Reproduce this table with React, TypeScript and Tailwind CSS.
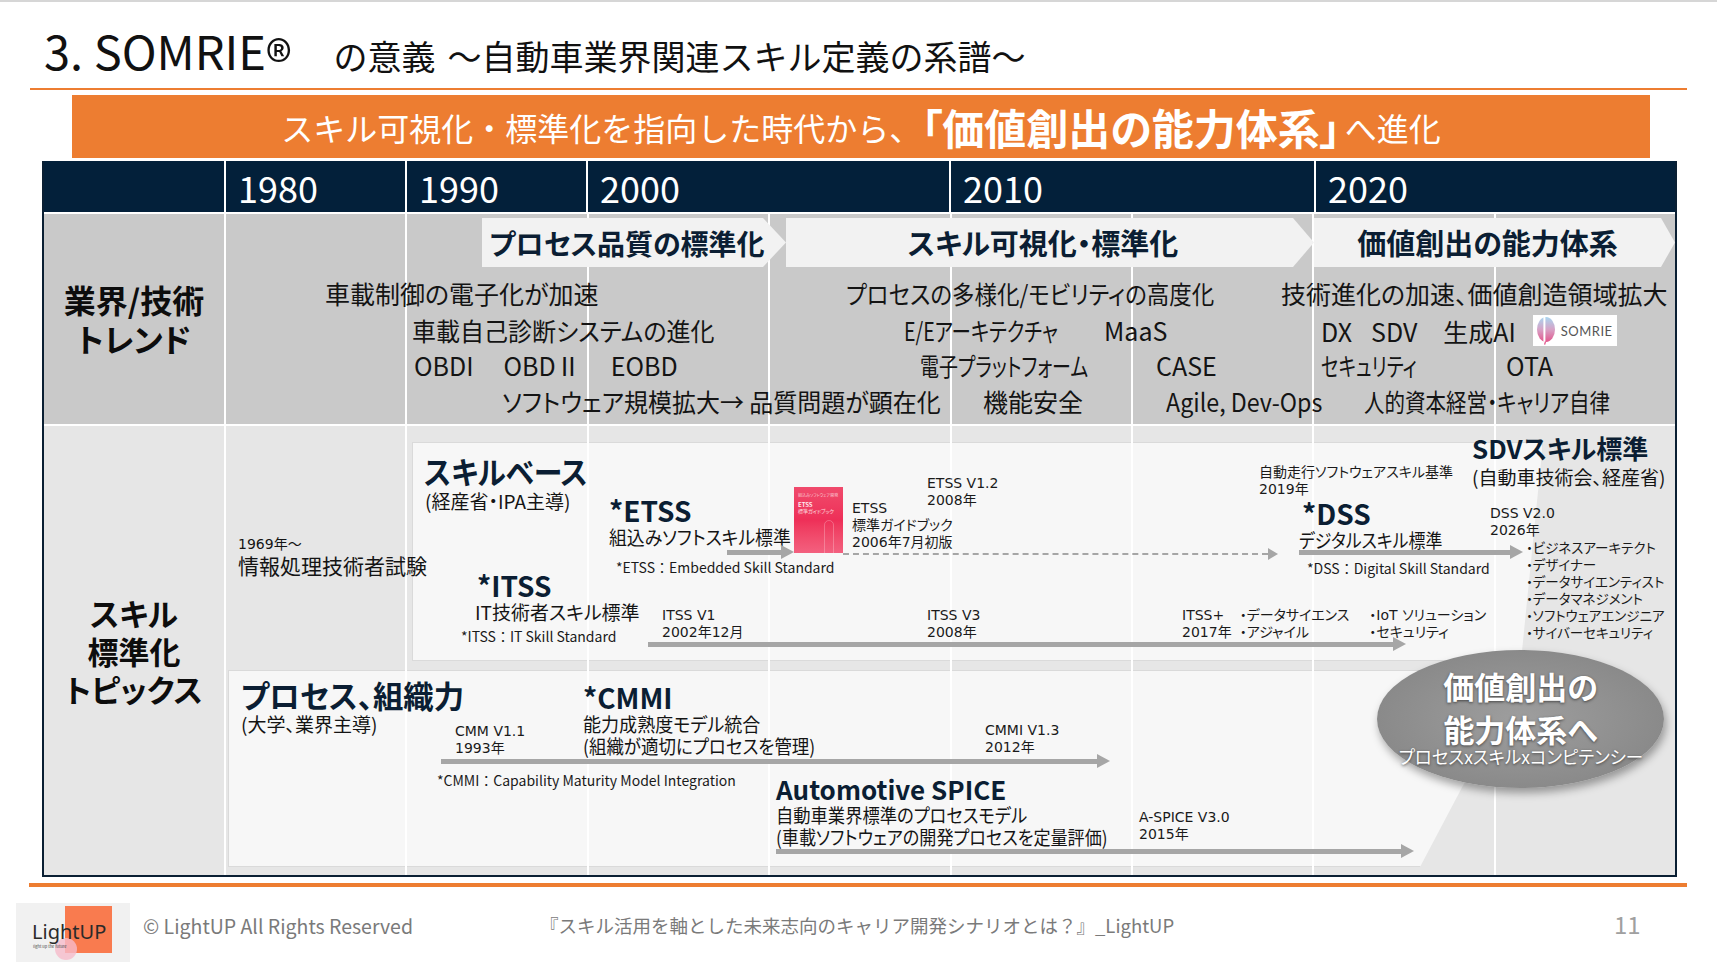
import React from "react";

const NOTE =
  "absolute whitespace-nowrap font-['DejaVu_Sans','Noto_Sans_CJK_JP',sans-serif] text-[14px] leading-[17px] text-[#1a1a1a]";
const LEGEND =
  "absolute whitespace-nowrap text-[14px] leading-[16px] text-[#1a1a1a] [font-feature-settings:normal]";
const TREND = "absolute whitespace-nowrap text-[25px] leading-[30px] text-[#141414]";

function Arrow({ className, dashed }: { className: string; dashed?: boolean }) {
  return (
    <div className={`absolute flex h-[14px] items-center ${className}`}>
      {dashed ? (
        <div className="flex-1 border-t-2 border-dashed border-[#a6a6a6]" />
      ) : (
        <div className="h-[5px] flex-1 bg-[#a6a6a6]" />
      )}
      {dashed ? (
        <div className="h-0 w-0 border-y-[6px] border-l-[10px] border-y-transparent border-l-[#a6a6a6]" />
      ) : (
        <div className="h-0 w-0 border-y-[7px] border-l-[13px] border-y-transparent border-l-[#a6a6a6]" />
      )}
    </div>
  );
}

function ColumnLines() {
  return (
    <div className="absolute inset-0 grid grid-cols-8">
      {[0, 1, 2, 3, 4, 5, 6, 7].map((i) => (
        <div key={i} className="border-l-2 border-white" />
      ))}
    </div>
  );
}

function SomrieLogo() {
  return (
    <div className="flex h-[31px] w-[84px] items-center gap-[4px] bg-white pl-[2px]">
      <svg width="22" height="29" viewBox="0 0 22 29">
        <defs>
          <linearGradient id="somrie-g" x1="0" y1="0" x2="0" y2="1">
            <stop offset="0" stopColor="#a9d6f0" />
            <stop offset="0.5" stopColor="#d7a2c6" />
            <stop offset="1" stopColor="#e2568c" />
          </linearGradient>
        </defs>
        <ellipse cx="11" cy="13.5" rx="9" ry="12.5" fill="url(#somrie-g)" />
        <rect x="8.4" y="0.5" width="2" height="26" fill="#ffffff" />
        <path d="M10.5 25.5 L9.6 28.6" stroke="#e2568c" strokeWidth="1.3" />
      </svg>
      <span className="font-['Lato',sans-serif] text-[13px] tracking-[0.5px] text-[#555]">SOMRIE</span>
    </div>
  );
}

function Book() {
  return (
    <div className="absolute left-[570px] top-[61px] h-[66px] w-[49px] overflow-hidden bg-gradient-to-b from-[#f04a6c] via-[#ee2f58] to-[#f3607f] px-[4px] pt-[6px]">
      <div className="text-[4px] leading-[5px] text-white/70">組込みソフトウェア開発</div>
      <div className="mt-[3px] text-[6px] font-bold leading-[7px] text-white/90">ETSS</div>
      <div className="text-[5px] leading-[6px] text-white/80">標準ガイドブック</div>
      <div className="ml-[26px] mt-[6px] h-[40px] w-[10px] rounded-full border border-white/25" />
    </div>
  );
}

export default function App() {
  return (
    <div className="relative h-[966px] w-[1717px] overflow-hidden bg-white font-['Noto_Sans_CJK_JP',sans-serif] text-[#111]">
      <div className="h-[2px] bg-[#d6d6d6]" />

      {/* title */}
      <div className="flex h-[86px] items-baseline pl-[44px] pt-[24px]">
        <span className="text-[47px] leading-none">3. SOMRIE</span>
        <span className="mt-[5px] self-start text-[54px] leading-none">®</span>
        <span className="ml-[42px] text-[34px] leading-none">の意義</span>
        <span className="ml-[12px] text-[34px] leading-none">～自動車業界関連スキル定義の系譜～</span>
      </div>
      <div className="ml-[30px] h-[2px] w-[1657px] bg-[#ed7d31]" />

      {/* banner */}
      <div className="ml-[72px] mt-[5px] flex h-[63px] w-[1578px] items-center justify-center bg-[#ed7d31] text-white">
        <span className="text-[32px] leading-none">スキル可視化・標準化を指向した時代から、</span>
        <span className="text-[42px] font-bold leading-none [font-feature-settings:'palt']">「価値創出の能力体系」</span>
        <span className="ml-[4px] text-[32px] leading-none">へ進化</span>
      </div>

      {/* table */}
      <div className="ml-[42px] mt-[3px] w-[1635px] border-x-2 border-b-2 border-[#0a1f33]">
        <div className="flex h-[51px] bg-[#03203a] text-[36px] leading-none text-white">
          <div className="w-[180px]" />
          <div className="flex w-[181px] items-center border-l-2 border-white pl-[12px]">1980</div>
          <div className="flex w-[181px] items-center border-l-2 border-white pl-[12px]">1990</div>
          <div className="flex w-[363px] items-center border-l-2 border-white pl-[12px]">2000</div>
          <div className="flex w-[365px] items-center border-l-2 border-white pl-[12px]">2010</div>
          <div className="flex flex-1 items-center border-l-2 border-white pl-[12px]">2020</div>
        </div>
        <div className="h-[2px] bg-white" />

        {/* trend row */}
        <div className="flex h-[210px] bg-[#c9c9c9] [font-feature-settings:'palt']">
          <div className="flex w-[180px] flex-col items-center justify-center text-[32px] font-bold leading-[39px] text-[#0d0d0d]">
            <span>業界/技術</span>
            <span>トレンド</span>
          </div>
          <div className="relative flex-1">
            <ColumnLines />
            <div className="absolute left-[258px] top-[4px] flex h-[49px] w-[304px] items-center justify-center bg-[#f2f2f2] pr-[14px] text-[28px] font-bold text-[#0b1e33] [clip-path:polygon(0_0,calc(100%_-_23px)_0,100%_50%,calc(100%_-_23px)_100%,0_100%)]">
              プロセス品質の標準化
            </div>
            <div className="absolute left-[562px] top-[4px] flex h-[49px] w-[528px] items-center justify-center bg-[#f2f2f2] pr-[14px] text-[29px] font-bold text-[#0b1e33] [clip-path:polygon(0_0,calc(100%_-_21px)_0,100%_50%,calc(100%_-_21px)_100%,0_100%)]">
              スキル可視化・標準化
            </div>
            <div className="absolute left-[1090px] top-[4px] flex h-[49px] w-[361px] items-center justify-center bg-[#f2f2f2] pr-[14px] text-[29px] font-bold text-[#0b1e33] [clip-path:polygon(0_0,calc(100%_-_14px)_0,100%_50%,calc(100%_-_14px)_100%,0_100%)]">
              価値創出の能力体系
            </div>

            <div className={`${TREND} left-[101px] top-[64px]`}>車載制御の電子化が加速</div>
            <div className={`${TREND} left-[622px] top-[64px] origin-left scale-x-[0.9]`}>プロセスの多様化/モビリティの高度化</div>
            <div className={`${TREND} left-[1057px] top-[64px]`}>技術進化の加速、価値創造領域拡大</div>

            <div className={`${TREND} left-[188px] top-[101px] origin-left scale-x-[0.96]`}>車載自己診断システムの進化</div>
            <div className={`${TREND} left-[680px] top-[101px] origin-left scale-x-[0.78]`}>E/Eアーキテクチャ</div>
            <div className={`${TREND} left-[880px] top-[101px]`}>MaaS</div>
            <div className={`${TREND} left-[1097px] top-[101px] flex items-center`}>
              <span>DX</span>
              <span className="ml-[19px]">SDV</span>
              <span className="ml-[26px]">生成AI</span>
              <span className="ml-[17px]">
                <SomrieLogo />
              </span>
            </div>

            <div className={`${TREND} left-[190px] top-[136px] flex gap-[30px]`}>
              <span>OBDI</span>
              <span>OBDⅡ</span>
              <span>EOBD</span>
            </div>
            <div className={`${TREND} left-[696px] top-[136px] origin-left scale-x-[0.76]`}>電子プラットフォーム</div>
            <div className={`${TREND} left-[932px] top-[136px]`}>CASE</div>
            <div className={`${TREND} left-[1097px] top-[136px] origin-left scale-x-[0.74]`}>セキュリティ</div>
            <div className={`${TREND} left-[1282px] top-[136px]`}>OTA</div>

            <div className={`${TREND} left-[278px] top-[172px] origin-left scale-x-[0.96]`}>ソフトウェア規模拡大→ 品質問題が顕在化</div>
            <div className={`${TREND} left-[759px] top-[172px]`}>機能安全</div>
            <div className={`${TREND} left-[942px] top-[172px] origin-left scale-x-[0.93]`}>Agile, Dev-Ops</div>
            <div className={`${TREND} left-[1140px] top-[172px] origin-left scale-x-[0.82]`}>人的資本経営・キャリア自律</div>
          </div>
        </div>
        <div className="h-[2px] bg-white" />

        {/* skill standard row */}
        <div className="flex h-[449px] bg-[#e6e6e6] [font-feature-settings:'palt']">
          <div className="flex w-[180px] flex-col items-center justify-center text-[31px] font-bold leading-[38px] text-[#0d0d0d]">
            <span>スキル</span>
            <span>標準化</span>
            <span>トピックス</span>
          </div>
          <div className="relative flex-1 text-[#141414]">
            <div className="absolute left-[188px] top-[16px] h-[219px] w-[1131px] border border-[#dadada] bg-[#f7f7f7] [clip-path:polygon(0_0,100%_0,calc(100%_-_22px)_100%,0_100%)]" />
            <div className="absolute left-[4px] top-[244px] h-[197px] w-[1296px] border border-[#dadada] bg-[#f7f7f7] [clip-path:polygon(0_0,100%_0,calc(100%_-_104px)_100%,0_100%)]" />
            <ColumnLines />

            {/* skill based */}
            <div className="absolute left-[200px] top-[27px] flex flex-col whitespace-nowrap">
              <span className="origin-left scale-x-[0.93] text-[31px] font-bold leading-[36px] text-[#0b1e33]">スキルベース</span>
              <span className="ml-[1px] text-[19px] leading-[23px]">(経産省・IPA主導)</span>
            </div>
            <div className="absolute left-[14px] top-[110px] flex flex-col whitespace-nowrap">
              <span className="font-['DejaVu_Sans','Noto_Sans_CJK_JP',sans-serif] text-[14px] leading-[16px]">1969年～</span>
              <span className="text-[21px] leading-[26px]">情報処理技術者試験</span>
            </div>

            <div className="absolute left-[385px] top-[68px] flex flex-col whitespace-nowrap">
              <span className="text-[28px] font-bold leading-[32px] text-[#0b1e33]">*ETSS</span>
              <span className="origin-left scale-x-[0.94] text-[19px] leading-[22px]">組込みソフトスキル標準</span>
            </div>
            <Arrow className="left-[503px] top-[119px] w-[67px]" />
            <Book />
            <div className={`${NOTE} left-[628px] top-[74px]`}>
              ETSS
              <br />
              標準ガイドブック
              <br />
              2006年7月初版
            </div>
            <div className={`${NOTE} left-[703px] top-[49px]`}>
              ETSS V1.2
              <br />
              2008年
            </div>
            <Arrow dashed className="left-[619px] top-[121px] w-[435px]" />
            <div className={`${LEGEND} left-[392px] top-[133px]`}>*ETSS：Embedded Skill Standard</div>

            <div className="absolute left-[251px] top-[143px] flex flex-col whitespace-nowrap">
              <span className="ml-[2px] text-[28px] font-bold leading-[32px] text-[#0b1e33]">*ITSS</span>
              <span className="text-[19px] leading-[22px]">IT技術者スキル標準</span>
            </div>
            <div className={`${LEGEND} left-[237px] top-[202px]`}>*ITSS：IT Skill Standard</div>
            <div className={`${NOTE} left-[438px] top-[181px]`}>
              ITSS V1
              <br />
              2002年12月
            </div>
            <div className={`${NOTE} left-[703px] top-[181px]`}>
              ITSS V3
              <br />
              2008年
            </div>
            <div className={`${NOTE} left-[958px] top-[181px] flex gap-[8px]`}>
              <span>
                ITSS+
                <br />
                2017年
              </span>
              <span>
                ・データサイエンス
                <br />
                ・アジャイル
              </span>
              <span className="ml-[12px]">
                ・IoT ソリューション
                <br />
                ・セキュリティ
              </span>
            </div>
            <Arrow className="left-[424px] top-[211px] w-[758px]" />

            <div className={`${NOTE} left-[1035px] top-[38px] text-[13px]`}>
              自動走行ソフトウェアスキル基準
              <br />
              2019年
            </div>
            <div className="absolute left-[1075px] top-[71px] flex flex-col whitespace-nowrap">
              <span className="ml-[3px] text-[28px] font-bold leading-[32px] text-[#0b1e33]">*DSS</span>
              <span className="origin-left scale-x-[0.89] text-[19px] leading-[22px]">デジタルスキル標準</span>
            </div>
            <Arrow className="left-[1075px] top-[119px] w-[224px]" />
            <div className={`${LEGEND} left-[1083px] top-[134px]`}>*DSS：Digital Skill Standard</div>

            <div className="absolute left-[1248px] top-[7px] flex flex-col whitespace-nowrap">
              <span className="text-[26px] font-bold leading-[30px] text-[#0b1e33]">SDVスキル標準</span>
              <span className="mt-[2px] text-[19px] leading-[24px]">(自動車技術会、経産省)</span>
            </div>
            <div className={`${NOTE} left-[1266px] top-[79px]`}>
              DSS V2.0
              <br />
              2026年
            </div>
            <div className="absolute left-[1302px] top-[113px] flex flex-col whitespace-nowrap text-[13.5px] leading-[17px] text-[#1a1a1a]">
              <span>・ビジネスアーキテクト</span>
              <span>・デザイナー</span>
              <span>・データサイエンティスト</span>
              <span>・データマネジメント</span>
              <span>・ソフトウェアエンジニア</span>
              <span>・サイバーセキュリティ</span>
            </div>

            {/* process */}
            <div className="absolute left-[17px] top-[251px] flex flex-col whitespace-nowrap">
              <span className="origin-left scale-x-[0.98] text-[31px] font-bold leading-[36px] text-[#0b1e33]">プロセス、組織力</span>
              <span className="text-[19px] leading-[22px]">(大学、業界主導)</span>
            </div>
            <div className="absolute left-[359px] top-[255px] flex flex-col whitespace-nowrap">
              <span className="text-[28px] font-bold leading-[32px] text-[#0b1e33]">*CMMI</span>
              <span className="origin-left scale-x-[0.95] text-[19px] leading-[22px]">能力成熟度モデル統合</span>
              <span className="origin-left scale-x-[0.92] text-[19px] leading-[22px]">(組織が適切にプロセスを管理)</span>
            </div>
            <div className={`${NOTE} left-[231px] top-[297px]`}>
              CMM V1.1
              <br />
              1993年
            </div>
            <div className={`${NOTE} left-[761px] top-[296px]`}>
              CMMI V1.3
              <br />
              2012年
            </div>
            <Arrow className="left-[217px] top-[328px] w-[669px]" />
            <div className={`${LEGEND} left-[213px] top-[346px]`}>*CMMI：Capability Maturity Model Integration</div>

            <div className="absolute left-[552px] top-[347px] flex flex-col whitespace-nowrap">
              <span className="text-[26px] font-bold leading-[31px] text-[#0b1e33]">Automotive SPICE</span>
              <span className="origin-left scale-x-[0.91] text-[19px] leading-[22px]">自動車業界標準のプロセスモデル</span>
              <span className="origin-left scale-x-[0.9] text-[19px] leading-[22px]">(車載ソフトウェアの開発プロセスを定量評価)</span>
            </div>
            <div className={`${NOTE} left-[915px] top-[383px]`}>
              A-SPICE V3.0
              <br />
              2015年
            </div>
            <Arrow className="left-[552px] top-[418px] w-[638px]" />

            {/* value creation bubble */}
            <div className="absolute left-[1153px] top-[224px] flex h-[138px] w-[287px] flex-col items-center rounded-[50%] bg-[radial-gradient(ellipse_at_center,#9e9e9e_0%,#8a8a8a_70%,#7c7c7c_100%)] pt-[14px] text-white shadow-[2px_5px_8px_rgba(0,0,0,0.35)] [text-shadow:0_1px_3px_rgba(0,0,0,0.55)]">
              <span className="text-[31px] font-bold leading-[43px]">価値創出の</span>
              <span className="text-[31px] font-bold leading-[43px]">能力体系へ</span>
              <span className="-mt-[4px] origin-center scale-x-[0.97] text-[18px] leading-[20px]">プロセスxスキルxコンピテンシー</span>
            </div>
          </div>
        </div>
      </div>

      <div className="ml-[29px] mt-[6px] h-[4px] w-[1658px] bg-[#ed7d31]" />

      {/* footer */}
      <div className="mt-[16px] flex h-[59px] items-center">
        <div className="relative ml-[16px] h-[59px] w-[114px] shrink-0 overflow-hidden bg-[#f1f1f1]">
          <div className="absolute left-[49px] top-[3px] h-[47px] w-[47px] bg-[#f97b4f]" />
          <div className="absolute left-[39px] top-[35px] h-[22px] w-[22px] rounded-full bg-[#f6bccb]/80" />
          <div className="absolute left-[16px] top-[17px] font-['Noto_Sans',sans-serif] text-[20px] leading-[24px] text-[#2a2a2a]">
            LightUP
          </div>
          <div className="absolute left-[17px] top-[41px] whitespace-nowrap text-[4px] leading-[5px] text-[#444]">
            light up the future
          </div>
        </div>
        <div className="mb-[13px] ml-[13px] w-[397px] text-[19.5px] text-[#7a7a7a]">© LightUP All Rights Reserved</div>
        <div className="mb-[13px] w-[1074px] whitespace-nowrap text-[18.5px] text-[#7a7a7a]">
          『スキル活用を軸とした未来志向のキャリア開発シナリオとは？』_LightUP
        </div>
        <div className="mb-[18px] text-[24px] text-[#a0a0a0]">11</div>
      </div>
    </div>
  );
}
